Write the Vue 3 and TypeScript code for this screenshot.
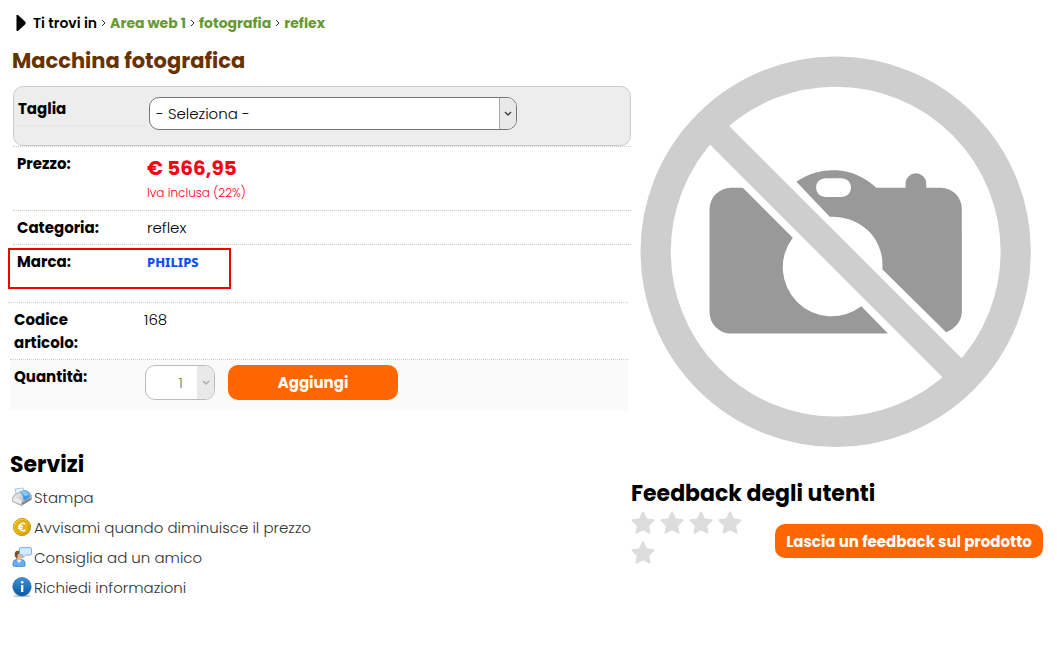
<script setup lang="ts">
import { ref } from 'vue'

const crumbs: string[] = ['Area web 1', 'fotografia', 'reflex']
const size = ref('')
const quantity = ref('1')
const stars = 5
</script>

<template>
  <div class="page">
    <main class="product">
      <nav class="crumbs" aria-label="Ti trovi in">
        <svg class="marker" viewBox="0 0 10 16" aria-hidden="true"><path d="M0.5 0h1.5l7.500 7v2l-7.500 7h-1.500z" /></svg>
        <strong>Ti trovi in</strong>
        <template v-for="crumb in crumbs" :key="crumb">
          <svg class="sep" viewBox="0 0 5 8" aria-hidden="true"><path d="M1 1l3 3-3 3" /></svg>
          <a href="#">{{ crumb }}</a>
        </template>
      </nav>

      <h1>Macchina fotografica</h1>

      <form @submit.prevent>
        <div class="variant-row">
          <div class="variant">
            <label class="variant-label" for="size">Taglia</label>
            <span class="select-box">
              <select id="size" v-model="size">
                <option value="">- Seleziona -</option>
              </select>
              <span class="arrow"><svg viewBox="0 0 8 6" aria-hidden="true"><path d="M1 1l3 3 3-3" /></svg></span>
            </span>
          </div>
        </div>

        <div class="row price-row">
          <span class="label">Prezzo:</span>
          <div class="value">
            <div class="price">€ 566,95</div>
            <div class="tax">Iva inclusa (22%)</div>
          </div>
        </div>
        <div class="row">
          <span class="label">Categoria:</span>
          <span class="value">reflex</span>
        </div>
        <div class="brand-row">
          <div class="brand">
            <span class="label">Marca:</span>
            <a class="logo" href="#">PHILIPS</a>
          </div>
        </div>
        <div class="row code-row">
          <span class="label">Codice articolo:</span>
          <span class="value">168</span>
        </div>
        <div class="row quantity-row">
          <label class="label" for="quantity">Quantità:</label>
          <span class="select-box small">
            <select id="quantity" v-model="quantity">
              <option>1</option>
            </select>
            <span class="arrow"><svg viewBox="0 0 8 6" aria-hidden="true"><path d="M1 1l3 3 3-3" /></svg></span>
          </span>
          <button class="add" type="submit">Aggiungi</button>
        </div>
      </form>

      <section class="services">
        <h2>Servizi</h2>
        <ul>
          <li>
            <a href="#">
              <svg viewBox="0 0 20 20" aria-hidden="true">
                <defs>
                  <linearGradient id="body" x1="0" y1="0" x2="1" y2="1">
                    <stop offset="0" stop-color="#fafafa" /><stop offset="1" stop-color="#9a9da2" />
                  </linearGradient>
                </defs>
                <path d="M3 2l8-1 2 6-8 4z" fill="#eaf5fd" stroke="#8fbbe0" stroke-width=".8" />
                <path d="M0.7 10.500Q1 8 5 6.500l8-3q5 1 6.300 5v4l-10 6-8.600-4z" fill="url(#body)" stroke="#8b8f95" stroke-width=".7" />
                <path d="M7.500 4.500l5.500-1.500q4.500 2 5 6.500l-3.500 3.500-3 .5Q11.500 8 7.500 4.500z" fill="#3f9de8" />
                <path d="M8 4.500l4.500-1q3.500 1.500 4.500 4.500L12.500 9Q11 6.500 8 4.500z" fill="#8bcaf7" />
                <path d="M1.200 11q5-1 8.300 2.500v4.300L1.500 14z" fill="#ececec" />
                <path d="M9.700 18l9.300-5.500V11l-9.300 5z" fill="#777c82" />
              </svg>
              <span>Stampa</span>
            </a>
          </li>
          <li>
            <a href="#">
              <svg viewBox="0 0 20 20" aria-hidden="true">
                <defs>
                  <linearGradient id="coin" x1="0" y1="0" x2="1" y2="1">
                    <stop offset="0" stop-color="#ffe84a" /><stop offset="1" stop-color="#d29300" />
                  </linearGradient>
                </defs>
                <circle cx="10" cy="10" r="8.600" fill="url(#coin)" stroke="#c99a13" stroke-width="1" />
                <circle cx="10" cy="10" r="6.600" fill="#e9b40c" stroke="#d29b08" stroke-width=".7" />
                <path d="M13.300 7.200a3.600 3.600 0 1 0 0 5.600M6 9.200h5M6 11.200h4.500" fill="none" stroke="#fff" stroke-width="1.600" />
              </svg>
              <span>Avvisami quando diminuisce il prezzo</span>
            </a>
          </li>
          <li>
            <a href="#">
              <svg viewBox="0 0 20 20" aria-hidden="true">
                <path d="M1 19v-3q0-3.500 4-3.500h4q4 0 4 3.500v3q-6 1.500-12 0z" fill="#69aef0" stroke="#397dc7" stroke-width=".8" />
                <path d="M5 13l2 3 2.500-3z" fill="#fff" />
                <ellipse cx="7" cy="9" rx="3.200" ry="4.300" fill="#e8b98a" />
                <path d="M3.300 10C1.500 5 4 3.500 7 3.800q2.500.2 2.700 2.400L6 7l-1 5z" fill="#7a5230" />
                <path d="M9 .6h9q1.500 0 1.500 1.500v4q0 1.900-1.500 1.900h-4.500L10.500 11l.5-3H9Q7.500 8 7.500 6.500V2Q7.500.6 9 .6z" fill="#d2ebff" stroke="#74a9d9" stroke-width=".9" />
              </svg>
              <span>Consiglia ad un amico</span>
            </a>
          </li>
          <li>
            <a href="#">
              <svg viewBox="0 0 20 20" aria-hidden="true">
                <defs>
                  <linearGradient id="info" x1="0" y1="0" x2="0" y2="1">
                    <stop offset="0" stop-color="#3e91d8" /><stop offset="1" stop-color="#0757a2" />
                  </linearGradient>
                </defs>
                <ellipse cx="10" cy="19" rx="8.500" ry="1" fill="#bbb" />
                <circle cx="10" cy="9.700" r="9.200" fill="url(#info)" stroke="#1b66ad" stroke-width=".7" />
                <circle cx="10.200" cy="5.300" r="1.300" fill="#fff" />
                <path d="M9 8h2.300v7H9z" fill="#fff" />
              </svg>
              <span>Richiedi informazioni</span>
            </a>
          </li>
        </ul>
      </section>
    </main>

    <aside class="side">
      <svg class="photo" viewBox="29 33 1176 1176" role="img" aria-label="Immagine non disponibile">
        <path
          fill="#999"
          d="M302 429h36L488 579A147 147 0 0 0 694 785L774 867H302A64 64 0 0 1 238 803V493A64 64 0 0 1 302 429z"
        />
        <path
          fill="#999"
          fill-rule="evenodd"
          d="M499 411A188 188 0 0 1 739 429H827V416A31 31 0 0 1 889 416V429H933A63 63 0 0 1 996 493V803Q993 844 949 863L757 674C765 580 690 512 599 516zM586 400A28 28 0 0 0 558 428A28 28 0 0 0 586 457H635A28 28 0 0 0 663 428A28 28 0 0 0 635 400z"
        />
        <circle cx="617" cy="621" r="541" fill="none" stroke="#cecece" stroke-width="91" />
        <path d="M200 240L297 243 996 942 1030 990 938 998 240 300z" fill="#cecece" />
      </svg>

      <section class="feedback">
        <h2>Feedback degli utenti</h2>
        <div class="feedback-body">
          <div class="stars" role="img" aria-label="0 su 5 stelle">
            <svg v-for="n in stars" :key="n" viewBox="0 0 24 24">
              <path
                d="M12 1.500l3.200 6.800 7.300 1-5.400 5.100 1.400 7.300L12 18.200l-6.500 3.500 1.400-7.300L1.500 9.300l7.300-1z"
                fill="#ddd" stroke="#ddd" stroke-width="2" stroke-linejoin="round"
              />
            </svg>
          </div>
          <button class="leave" type="button">Lascia un feedback sul prodotto</button>
        </div>
      </section>
    </aside>
  </div>
</template>

<style>
body {
  margin: 0;
  background: #fff;
}
</style>

<style scoped>
.page {
  display: grid;
  grid-template-columns: 623fr 412fr;
  padding: 12px 14px 0 8px;
  font: 300 15px/23px Poppins, Inter, "Open Sans", sans-serif;
  color: #000;
}
.page * {
  box-sizing: border-box;
}
a {
  text-decoration: none;
}
.crumbs {
  display: flex;
  align-items: center;
  gap: 4px;
  height: 22px;
  padding-left: 8px;
  font-size: 14px;
}
.crumbs strong {
  font-weight: 600;
}
.crumbs a {
  color: #693;
  font-weight: 700;
}
.marker {
  width: 10px;
  height: 16px;
  margin-right: 3px;
}
.sep {
  width: 5px;
  height: 8px;
}
.sep path {
  fill: none;
  stroke: #333;
}
h1 {
  margin: 10px 0 9px 4px;
  font-size: 21px;
  line-height: 33px;
  font-weight: 700;
  color: #630;
}
.variant-row {
  margin-left: 5px;
  border-bottom: 1px dotted #ccc;
}
.variant {
  display: flex;
  align-items: flex-start;
  height: 60px;
  padding: 10px 1px;
  background: #ededed;
  border: 1px solid #ccc;
  border-radius: 10px;
}
.variant-label {
  width: 130px;
  height: 29px;
  margin-right: 4px;
  padding-left: 3px;
  border-bottom: 1px dotted #ddd;
  font-weight: 700;
}
.select-box {
  display: flex;
  position: relative;
  width: 60%;
  height: 33px;
}
.select-box select {
  appearance: none;
  width: 100%;
  padding: 0 24px 0 6px;
  font: inherit;
  color: #000;
  background: #fff;
  border: 1px solid #767676;
  border-radius: 10px;
}
.arrow {
  position: absolute;
  top: 1px;
  right: 1px;
  bottom: 1px;
  width: 17px;
  display: flex;
  align-items: center;
  justify-content: center;
  background: #e9e9e9;
  border-left: 1px solid #aaa;
  border-radius: 0 9px 9px 0;
  pointer-events: none;
}
.arrow svg {
  width: 8px;
  height: 6px;
}
.arrow path {
  fill: none;
  stroke: #444;
  stroke-width: 1.5;
}
.row {
  display: flex;
  align-items: flex-start;
  margin-left: 5px;
  padding: 5px 4px;
  border-bottom: 1px dotted #ccc;
}
.label {
  width: 130px;
  flex: none;
  font-weight: 700;
}
.price-row {
  height: 64px;
}
.price {
  margin-top: 5px;
  font-size: 20px;
  font-weight: 700;
  color: #ff0012;
}
.tax {
  font-size: 12px;
  line-height: 26px;
  color: #ff0012;
}
.brand-row {
  height: 58px;
  padding-top: 3px;
  margin: 0 3px 0 0;
  border-bottom: 1px dotted #ccc;
}
.brand {
  display: flex;
  width: 36%;
  height: 41px;
  padding-left: 7px;
  border: 2px solid #f00000;
}
.logo {
  font-family: "Noto Sans", "Open Sans", sans-serif;
  font-size: 13px;
  line-height: 25px;
  font-weight: 800;
  color: #0b4ff5;
}
.code-row,
.quantity-row {
  margin: 0 3px 0 2px;
}
.code-row .label {
  padding-right: 30px;
}
.quantity-row {
  height: 50px;
  background: #fafafa;
  border-bottom: 0;
}
.select-box.small {
  width: 70px;
  height: 35px;
  margin: 0 13px 0 1px;
}
.small select {
  padding: 0 31px 0 6px;
  text-align-last: right;
  color: #777;
  border-color: #bbb;
}
.small .arrow {
  border-left: 0;
}
.small .arrow path {
  stroke: #aaa;
}
button {
  font: inherit;
  font-weight: 700;
  color: #fff;
  background: #f60;
  border: 0;
  border-radius: 10px;
  cursor: pointer;
}
.add {
  width: 170px;
  height: 35px;
}
.services {
  margin-top: 38px;
  padding-left: 2px;
}
h2 {
  margin: 0;
  font-size: 22px;
  line-height: 34px;
  font-weight: 700;
}
ul {
  margin: 0;
  padding: 0 0 0 2px;
  list-style: none;
}
li a {
  display: flex;
  align-items: center;
  gap: 2px;
  height: 30px;
  color: #333;
}
li svg {
  width: 20px;
  height: 20px;
}
.side {
  padding-top: 44px;
}
.photo {
  display: block;
  width: 95%;
  margin-left: 9px;
}
.feedback {
  margin-top: 30px;
}
.feedback-body {
  display: flex;
  justify-content: space-between;
  align-items: flex-start;
}
.stars {
  display: flex;
  flex-wrap: wrap;
  gap: 6px 5px;
  width: 120px;
}
.stars svg {
  width: 24px;
  height: 24px;
}
.leave {
  width: 268px;
  height: 34px;
  margin-top: 13px;
  padding: 0;
}
</style>
